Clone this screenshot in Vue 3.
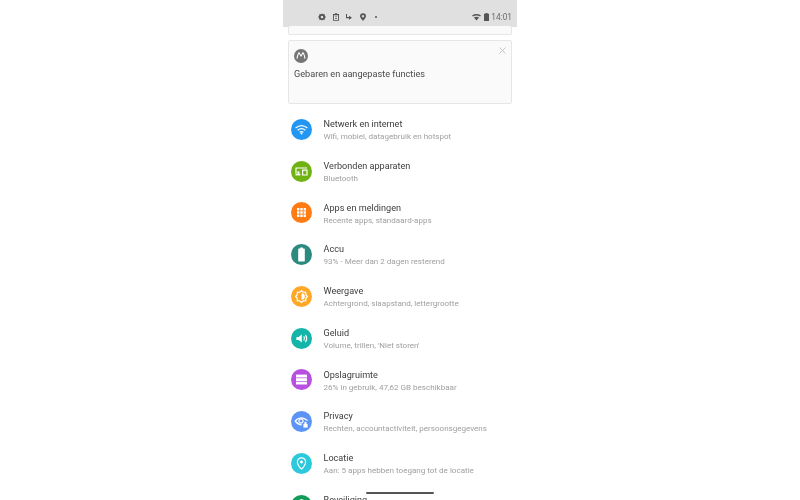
<script setup>
// Settings list data; each icon is a set of shapes drawn in a 21x21 box
const settings = [
  {
    title: 'Netwerk en internet',
    sub: 'Wifi, mobiel, datagebruik en hotspot',
    color: '#2196f3',
    strokes: ['M4.6 9 Q10.5 4.2 16.4 9', 'M6.6 11.2 Q10.5 8 14.4 11.2', 'M8.6 13.3 Q10.5 11.8 12.4 13.3'],
    fills: ['M9.4 14.6 L10.5 13.6 L11.6 14.6 L10.5 15.8 Z']
  },
  {
    title: 'Verbonden apparaten',
    sub: 'Bluetooth',
    color: '#6fb212',
    strokes: ['M5 12.5 V7 H16'],
    fills: [
      'M4.5 12.8 H9.4 V14.4 H4.5 Z',
      'M6.4 10.4 H8.4 V12.8 H6.4 Z',
      'M11 8.6 H16.6 V14.6 H11 Z M12.2 9.8 V13.4 H15.4 V9.8 Z'
    ]
  },
  {
    title: 'Apps en meldingen',
    sub: 'Recente apps, standaard-apps',
    color: '#ff7b14',
    strokes: [],
    fills: [
      'M6 6 h2.4 v2.4 h-2.4 Z M9.3 6 h2.4 v2.4 h-2.4 Z M12.6 6 h2.4 v2.4 h-2.4 Z',
      'M6 9.3 h2.4 v2.4 h-2.4 Z M9.3 9.3 h2.4 v2.4 h-2.4 Z M12.6 9.3 h2.4 v2.4 h-2.4 Z',
      'M6 12.6 h2.4 v2.4 h-2.4 Z M9.3 12.6 h2.4 v2.4 h-2.4 Z M12.6 12.6 h2.4 v2.4 h-2.4 Z'
    ]
  },
  {
    title: 'Accu',
    sub: '93% - Meer dan 2 dagen resterend',
    color: '#2a8a7e',
    strokes: [],
    fills: ['M9.2 3.6 H11.8 V4.6 H13.2 Q13.8 4.6 13.8 5.2 V16.8 Q13.8 17.4 13.2 17.4 H7.8 Q7.2 17.4 7.2 16.8 V5.2 Q7.2 4.6 7.8 4.6 H9.2 Z']
  },
  {
    title: 'Weergave',
    sub: 'Achtergrond, slaapstand, lettergrootte',
    color: '#ffa726',
    strokes: ['M10.5 4.6 L12.3 6.2 L14.7 6.3 L14.8 8.7 L16.4 10.5 L14.8 12.3 L14.7 14.7 L12.3 14.8 L10.5 16.4 L8.7 14.8 L6.3 14.7 L6.2 12.3 L4.6 10.5 L6.2 8.7 L6.3 6.3 L8.7 6.2 Z'],
    fills: ['M10.5 7.2 A3.3 3.3 0 0 1 10.5 13.8 Z']
  },
  {
    title: 'Geluid',
    sub: "Volume, trillen, 'Niet storen'",
    color: '#12b5a8',
    strokes: ['M12.8 8.4 Q14.2 10.5 12.8 12.6', 'M14.4 6.8 Q16.8 10.5 14.4 14.2'],
    fills: ['M5.4 8.9 H7.6 L10.8 6.4 V14.6 L7.6 12.1 H5.4 Z']
  },
  {
    title: 'Opslagruimte',
    sub: '26% in gebruik, 47,62 GB beschikbaar',
    color: '#b94fe0',
    strokes: [],
    fills: ['M5 5.6 H16 V8.5 H5 Z', 'M5 9.2 H16 V12 H5 Z', 'M5 12.7 H16 V15.5 H5 Z']
  },
  {
    title: 'Privacy',
    sub: 'Rechten, accountactiviteit, persoonsgegevens',
    color: '#5c94f5',
    strokes: ['M4 10 Q10 3.8 16.5 9.5', 'M4 10 Q7 13.6 10.8 14', 'M10 7.9 A2.1 2.1 0 1 1 9.99 7.9 Z'],
    fills: [
      'M12.4 13 H16.6 V16.6 H12.4 Z',
      'M13.4 13 V11.8 A1.1 1.1 0 0 1 15.6 11.8 V13 Z'
    ]
  },
  {
    title: 'Locatie',
    sub: 'Aan: 5 apps hebben toegang tot de locatie',
    color: '#2cc8dc',
    strokes: ['M10.5 16.2 Q6.4 11.8 6.4 8.9 A4.1 4.1 0 0 1 14.6 8.9 Q14.6 11.8 10.5 16.2 Z'],
    fills: ['M10.5 7.4 A1.5 1.5 0 1 1 10.49 7.4 Z']
  },
  {
    title: 'Beveiliging',
    sub: '',
    color: '#0f9d58',
    strokes: [],
    fills: ['M10.5 4 L15.5 6 V10 Q15.5 14.5 10.5 17 Q5.5 14.5 5.5 10 V6 Z']
  }
]
</script>

<template>
  <div class="page">
    <div class="phone">
      <header class="status">
        <div class="status-left">
          <svg class="si" viewBox="0 0 8 8">
            <path d="M4 .4 L5 1.3 L6.5 1.1 L6.8 2.6 L7.8 4 L6.8 5.4 L6.5 6.9 L5 6.7 L4 7.6 L3 6.7 L1.5 6.9 L1.2 5.4 L.2 4 L1.2 2.6 L1.5 1.1 L3 1.3 Z M4 2.7 A1.3 1.3 0 1 0 4.01 2.7 Z" fill-rule="evenodd" />
          </svg>
          <svg class="si" viewBox="0 0 8 8">
            <path d="M1 1 H3 V.2 H5 V1 H7 V7.8 H1 Z M1.9 2.2 V7 H6.1 V2.2 Z M3 3.4 H5 V4.1 H3 Z M3 5 H5 V5.7 H3 Z" fill-rule="evenodd" />
          </svg>
          <svg class="si" viewBox="0 0 8 8">
            <path d="M1 1 H2 V4 H4 V2.8 L7 4.8 L4 6.8 V5.2 H1 Z" />
          </svg>
          <svg class="si" viewBox="0 0 8 8">
            <path d="M4 .2 A3 3 0 0 1 7 3.2 Q7 5 4 7.9 Q1 5 1 3.2 A3 3 0 0 1 4 .2 Z M4 2 A1.2 1.2 0 1 0 4.01 2 Z" fill-rule="evenodd" />
          </svg>
          <svg class="si" viewBox="0 0 8 8">
            <circle cx="4" cy="4" r="1" />
          </svg>
        </div>
        <div class="status-right">
          <svg class="wifi" viewBox="0 0 9 7">
            <path d="M0 1.4 Q4.5 -1.2 9 1.4 L8.1 2.5 Q4.5 .6 .9 2.5 Z M1.9 3.4 Q4.5 1.9 7.1 3.4 L4.5 6.6 Z" />
          </svg>
          <svg class="battery" viewBox="0 0 5 8">
            <path d="M1.5 0 H3.5 V.8 H5 V8 H0 V.8 H1.5 Z" />
          </svg>
          <span class="time">14:01</span>
        </div>
      </header>

      <div class="card card-stub"></div>

      <section class="card suggestion">
        <svg class="moto" viewBox="0 0 14 14">
          <circle cx="7" cy="7" r="7" fill="#757575" />
          <path d="M3 9.6 Q4 4.4 5 3.8 L7 7 L9 3.8 Q10 4.4 11 9.6" fill="none" stroke="#fff" stroke-width="1.1" />
        </svg>
        <svg class="close" viewBox="0 0 7 7">
          <path d="M.5 .5 L6.5 6.5 M6.5 .5 L.5 6.5" stroke="#bdbdbd" stroke-width=".9" />
        </svg>
        <p class="suggestion-text">Gebaren en aangepaste functies</p>
      </section>

      <ul class="list">
        <li v-for="item in settings" :key="item.title" class="row">
          <svg class="icon" viewBox="0 0 21 21">
            <circle cx="10.5" cy="10.5" r="10.5" :fill="item.color" />
            <path v-for="d in item.strokes" :key="d" :d="d" fill="none" stroke="#fff" stroke-width="1.2" />
            <path v-for="d in item.fills" :key="d" :d="d" fill="#fff" fill-rule="evenodd" />
          </svg>
          <div class="text">
            <div class="title">{{ item.title }}</div>
            <div class="sub">{{ item.sub }}</div>
          </div>
        </li>
      </ul>

      <div class="home-pill"></div>
    </div>
  </div>
</template>

<style>
body {
  background: #fff;
}
</style>

<style scoped>
.page {
  display: flex;
  justify-content: center;
  height: 500px;
  overflow: hidden;
  background: #fff;
  font-family: Roboto, "Liberation Sans", sans-serif;
}

.phone {
  position: relative;
  width: 234px;
  height: 500px;
  overflow: hidden;
  filter: blur(0.5px);
}

.status {
  display: flex;
  align-items: center;
  justify-content: space-between;
  box-sizing: border-box;
  height: 27px;
  padding: 7px 5px 0 35px;
  background: #e0e0e0;
}

.status-left {
  display: flex;
  align-items: center;
  gap: 5.5px;
}

.si {
  width: 8px;
  height: 8px;
  fill: #555;
}

.status-right {
  display: flex;
  align-items: center;
}

.wifi {
  width: 9px;
  height: 7px;
  fill: #555;
}

.battery {
  width: 5px;
  height: 8px;
  margin-left: 3px;
  fill: #555;
}

.time {
  margin-left: 2px;
  font-size: 8.3px;
  line-height: 10px;
  color: #6a6a6a;
}

.card {
  margin: 0 4.75px;
  border: 1px solid #e6e6e6;
  border-radius: 2px;
  background: #fafafa;
  box-sizing: border-box;
}

.card-stub {
  height: 9px;
  margin-top: -1px;
  border-top: 0;
}

.suggestion {
  position: relative;
  height: 64px;
  margin-top: 5px;
  padding: 8px 5.25px 0;
}

.moto {
  display: block;
  width: 14px;
  height: 14px;
}

.close {
  position: absolute;
  top: 6px;
  right: 5px;
  width: 7px;
  height: 7px;
}

.suggestion-text {
  margin: 4.5px 0 0;
  font-size: 9.15px;
  line-height: 13px;
  color: #4a4a4a;
}

.list {
  margin: 4.5px 0 0;
  padding: 0;
  list-style: none;
}

.row {
  display: flex;
  align-items: center;
  height: 41.75px;
  padding-left: 8.25px;
}

.icon {
  flex: none;
  width: 21px;
  height: 21px;
}

.text {
  margin-left: 11.25px;
  padding-top: 1.5px;
}

.title {
  font-size: 9.1px;
  line-height: 13px;
  color: #3c3c3c;
}

.sub {
  min-height: 11px;
  font-size: 8.05px;
  line-height: 11px;
  color: #a0a0a0;
  white-space: nowrap;
}

.home-pill {
  position: absolute;
  left: 83px;
  bottom: 6px;
  width: 68px;
  height: 2px;
  border-radius: 1px;
  background: #555;
}
</style>
